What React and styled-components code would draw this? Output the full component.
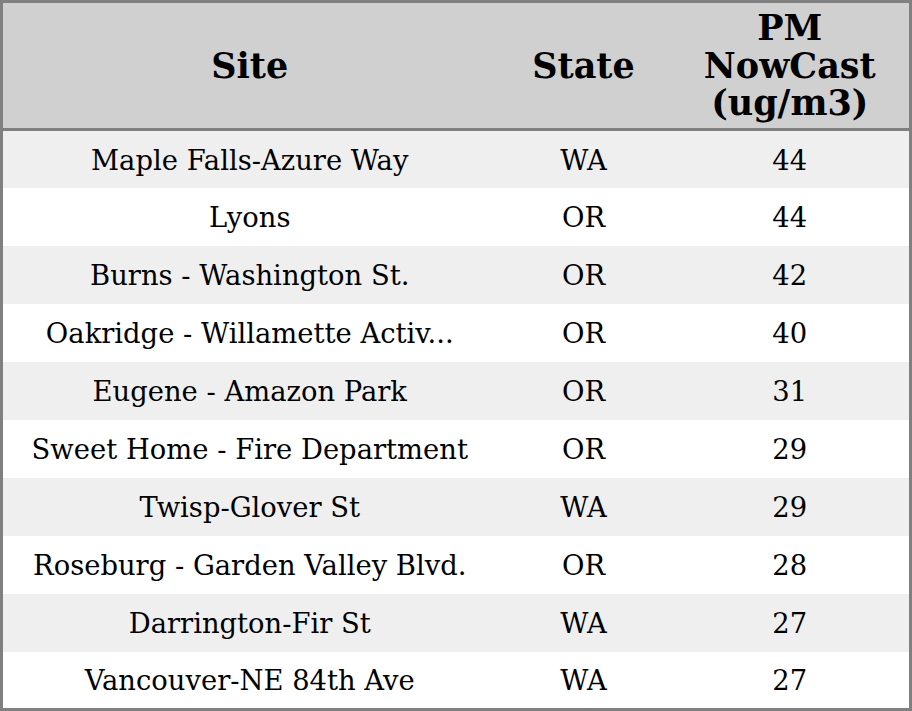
import React from "react";
import styled, { createGlobalStyle } from "styled-components";

const Global = createGlobalStyle`
  html, body { margin: 0; padding: 0; background: #ffffff; }
  body { font-family: "DejaVu Serif", serif; }
`;

const Table = styled.table`
  width: 912px;
  height: 711px;
  border-collapse: collapse;
  border: 3px solid #808080;
  table-layout: fixed;
  font-family: "DejaVu Serif", serif;
  color: #000;
`;

const Col = styled.col`
  width: ${(p) => p.$w}px;
`;

const HeadRow = styled.tr`
  background: #d0d0d0;
  height: 128px;
  border-bottom: 3px solid #808080;
`;

const Th = styled.th`
  box-sizing: border-box;
  font-size: 35px;
  line-height: 37.5px;
  font-weight: bold;
  text-align: center;
  vertical-align: middle;
  padding: 0 12px;
`;

const Row = styled.tr`
  background: ${(p) => (p.$alt ? "#efefef" : "#ffffff")};
  height: 57.7px;
`;

const Td = styled.td`
  box-sizing: border-box;
  font-size: 27.4px;
  text-align: center;
  vertical-align: middle;
  padding: 2px 6px 0;
  white-space: nowrap;
  overflow: hidden;
`;

const rows = [
  ["Maple Falls-Azure Way", "WA", "44"],
  ["Lyons", "OR", "44"],
  ["Burns - Washington St.", "OR", "42"],
  ["Oakridge - Willamette Activ...", "OR", "40"],
  ["Eugene - Amazon Park", "OR", "31"],
  ["Sweet Home - Fire Department", "OR", "29"],
  ["Twisp-Glover St", "WA", "29"],
  ["Roseburg - Garden Valley Blvd.", "OR", "28"],
  ["Darrington-Fir St", "WA", "27"],
  ["Vancouver-NE 84th Ave", "WA", "27"],
];

export default function App() {
  return (
    <>
      <Global />
      <Table>
        <colgroup>
          <Col $w={495} />
          <Col $w={174} />
          <Col $w={240} />
        </colgroup>
        <thead>
          <HeadRow>
            <Th>Site</Th>
            <Th>State</Th>
            <Th>PM NowCast (ug/m3)</Th>
          </HeadRow>
        </thead>
        <tbody>
          {rows.map((r, i) => (
            <Row key={i} $alt={i % 2 === 0}>
              <Td>{r[0]}</Td>
              <Td>{r[1]}</Td>
              <Td>{r[2]}</Td>
            </Row>
          ))}
        </tbody>
      </Table>
    </>
  );
}
